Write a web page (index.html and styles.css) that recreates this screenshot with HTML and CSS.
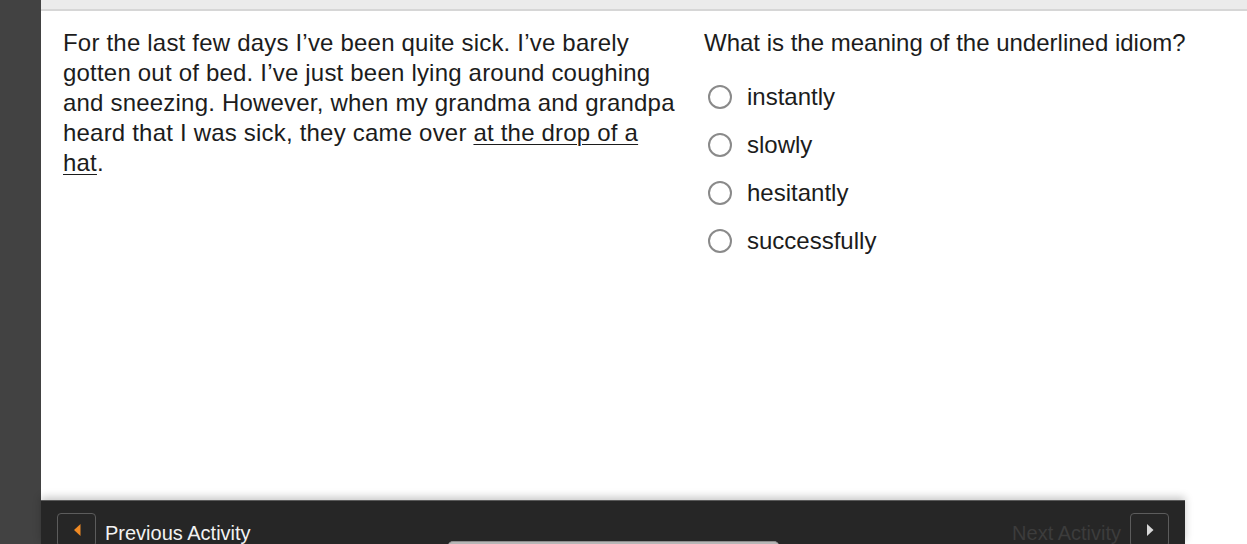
FILE: index.html
```html
<!DOCTYPE html>
<html>
<head>
<meta charset="utf-8">
<link rel="stylesheet" href="styles.css">
</head>
<body>
<div class="app">
  <div class="sidebar"></div>
  <div class="main">
    <div class="topbar"></div>
    <div class="content">
      <div class="passage">
        <p>For the last few days I’ve been quite sick. I’ve barely gotten out of bed. I’ve just been lying around coughing and sneezing. However, when my grandma and grandpa heard that I was sick, they came over <u>at the drop of a hat</u>.</p>
      </div>
      <div class="question">
        <p class="prompt">What is the meaning of the underlined idiom?</p>
        <ul class="options">
          <li class="option"><span class="radio"></span><span class="label">instantly</span></li>
          <li class="option"><span class="radio"></span><span class="label">slowly</span></li>
          <li class="option"><span class="radio"></span><span class="label">hesitantly</span></li>
          <li class="option"><span class="radio"></span><span class="label">successfully</span></li>
        </ul>
      </div>
    </div>
    <div class="footer">
      <div class="nav prev">
        <span class="navbtn"><svg width="10" height="14" viewBox="0 0 10 14"><path d="M8.5 1 L2 7 L8.5 13 Z" fill="#f08a24"/></svg></span>
        <span class="navtext">Previous Activity</span>
      </div>
      <div class="progress"></div>
      <div class="nav next">
        <span class="navtext dim">Next Activity</span>
        <span class="navbtn"><svg width="10" height="14" viewBox="0 0 10 14"><path d="M2 1 L8.5 7 L2 13 Z" fill="#d8d8d8"/></svg></span>
      </div>
    </div>
  </div>
</div>
</body>
</html>
```

FILE: styles.css
```css
html, body {
  margin: 0;
  padding: 0;
  background: #ffffff;
  overflow: hidden;
}
.app {
  display: flex;
  width: 1247px;
  height: 544px;
}
.sidebar {
  width: 41px;
  flex: none;
  background: #424242;
}
.main {
  flex: 1;
  display: flex;
  flex-direction: column;
  min-width: 0;
}
.topbar {
  height: 9px;
  flex: none;
  background: #ebebeb;
  border-bottom: 2px solid #d6d6d6;
}
.content {
  flex: 1;
  display: flex;
  padding: 17px 0 0 22px;
  gap: 25px;
  min-height: 0;
}
.passage {
  width: 616px;
  flex: none;
}
.passage p {
  margin: 0;
  font-family: "Liberation Sans", Arial, sans-serif;
  font-size: 24px;
  line-height: 30px;
  letter-spacing: 0.2px;
  color: #1c1c1c;
}
.passage u {
  text-decoration-thickness: 1px;
  text-underline-offset: 3px;
}
.question {
  flex: 1;
}
.prompt {
  margin: 0;
  font-family: "Liberation Sans", Arial, sans-serif;
  font-size: 24px;
  line-height: 30px;
  color: #1c1c1c;
}
.options {
  list-style: none;
  margin: 27px 0 0 0;
  padding: 0 0 0 4px;
  display: flex;
  flex-direction: column;
  gap: 24px;
}
.option {
  display: flex;
  align-items: center;
  gap: 15px;
  height: 24px;
}
.radio {
  width: 20px;
  height: 20px;
  border: 2px solid #8a8a8a;
  border-radius: 50%;
  flex: none;
}
.label {
  font-family: "Liberation Sans", Arial, sans-serif;
  font-size: 24px;
  color: #1c1c1c;
}
.footer {
  height: 44px;
  flex: none;
  width: 1144px;
  background: #262626;
  border-top: 1px solid #5a5a5a;
  box-shadow: 0 -3px 8px rgba(0,0,0,0.22);
  display: flex;
  align-items: flex-start;
  padding: 12px 16px 0 16px;
  box-sizing: border-box;
  position: relative;
}
.nav {
  display: flex;
  align-items: center;
  gap: 9px;
}
.navbtn {
  width: 39px;
  height: 34px;
  box-sizing: border-box;
  border: 1px solid #5c5c5c;
  border-radius: 4px;
  background: #262626;
  display: flex;
  align-items: center;
  justify-content: center;
}
.navtext {
  font-family: "Liberation Sans", Arial, sans-serif;
  font-size: 20px;
  color: #f2f2f2;
  padding-top: 6px;
}
.navtext.dim {
  color: #3c3c3c;
}
.progress {
  position: absolute;
  left: 407px;
  top: 40px;
  width: 331px;
  height: 10px;
  background: #b6b6b6;
  border-top: 1px solid #8c8c8c;
  border-radius: 5px 5px 0 0;
}
.next {
  margin-left: auto;
}
```
